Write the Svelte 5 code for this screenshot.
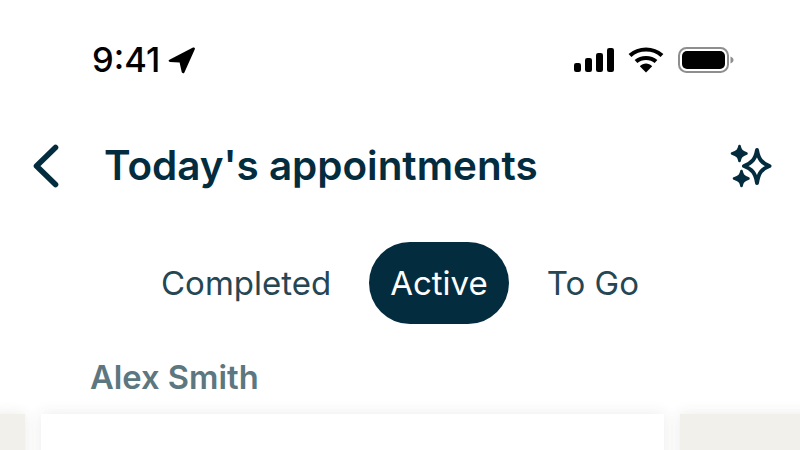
<script>
  const tabs = [
    { label: 'Completed', active: false },
    { label: 'Active', active: true },
    { label: 'To Go', active: false }
  ];
</script>

<div class="screen">
  <header class="status">
    <div class="time-group">
      <span class="time">9:41</span>
      <svg class="loc" width="28" height="28" viewBox="0 0 28 28" aria-hidden="true">
        <path d="M1.4 13.8 L25 1.6 C26.4 0.9 27.4 2 26.8 3.3 L16.4 26.4 C15.8 27.7 14 27.5 13.7 26.1 L11.6 16.4 L2 15.9 C0.5 15.8 0.1 14.5 1.4 13.8 Z" fill="#000"/>
      </svg>
    </div>
    <div class="sys">
      <svg class="signal" width="40" height="26" viewBox="0 0 40 26" aria-hidden="true">
        <rect x="0" y="16" width="7" height="9" rx="2.2"/>
        <rect x="11" y="11" width="7" height="14" rx="2.2"/>
        <rect x="22" y="6" width="7" height="19" rx="2.2"/>
        <rect x="33" y="1" width="7" height="24" rx="2.2"/>
      </svg>
      <svg class="wifi" width="36" height="26" viewBox="0 0 36 26" aria-hidden="true">
        <path d="M2 8.5 C11 0.5 25 0.5 34 8.5" fill="none" stroke="#000" stroke-width="4.2"/>
        <path d="M8 14.5 C13.5 9.8 22.5 9.8 28 14.5" fill="none" stroke="#000" stroke-width="4.2"/>
        <path d="M11.8 19.2 C15.5 15.6 20.5 15.6 24.2 19.2 L18 25.5 Z" fill="#000"/>
      </svg>
      <svg class="battery" width="56" height="26" viewBox="0 0 56 26" aria-hidden="true">
        <rect x="1" y="1" width="49" height="24" rx="7.5" fill="none" stroke="#8e8e8e" stroke-width="2"/>
        <rect x="4" y="4" width="43" height="18" rx="5" fill="#000"/>
        <path d="M52.5 9.5 C54.5 10.2 55.5 11.5 55.5 13 C55.5 14.5 54.5 15.8 52.5 16.5 Z" fill="#8e8e8e"/>
      </svg>
    </div>
  </header>

  <nav class="nav">
    <svg class="back" width="28" height="44" viewBox="0 0 28 44" aria-hidden="true">
      <path d="M24.5 3.5 L5.5 22 L24.5 40.5" fill="none" stroke="#032c3e" stroke-width="5.6" stroke-linecap="round" stroke-linejoin="round"/>
    </svg>
    <h1>Today's appointments</h1>
    <svg class="sparkle" width="42" height="44" viewBox="0 0 42 44" aria-hidden="true">
      <path d="M27 6 C28.5 15 31.5 19 39.5 22 C31.5 25 28.5 29 27 39 C25.5 29 22 25 14 22 C22 19 25.5 15 27 6 Z" fill="none" stroke="#032c3e" stroke-width="4" stroke-linejoin="round"/>
      <path d="M9.5 2 C10.3 6 11.5 7.6 16.5 9.5 C11.5 11.4 10.3 13 9.5 17 C8.7 13 7.5 11.4 2 9.5 C7.5 7.6 8.7 6 9.5 2 Z" fill="#032c3e" stroke="#032c3e" stroke-width="2.6" stroke-linejoin="round"/>
      <path d="M11.5 27 C12.3 31 13.5 32.6 18.5 34.5 C13.5 36.4 12.3 38 11.5 42 C10.7 38 9.5 36.4 4 34.5 C9.5 32.6 10.7 31 11.5 27 Z" fill="#032c3e" stroke="#032c3e" stroke-width="2.6" stroke-linejoin="round"/>
    </svg>
  </nav>

  <div class="tabs">
    {#each tabs as tab}
      <span class="tab" class:active={tab.active}>{tab.label}</span>
    {/each}
  </div>

  <h2>Alex Smith</h2>

  <div class="cards">
    <div class="card side left"></div>
    <div class="card main"></div>
    <div class="card side right"></div>
  </div>
</div>

<style>
  :global(body) {
    margin: 0;
    background: #fff;
  }
  .screen {
    width: 800px;
    height: 450px;
    overflow: hidden;
    background: #fff;
    font-family: Inter, "Liberation Sans", sans-serif;
    color: #032c3e;
    display: flex;
    flex-direction: column;
  }
  .status {
    height: 26px;
    margin-top: 47px;
    padding: 0 66px 0 92px;
    display: flex;
    justify-content: space-between;
    align-items: center;
    color: #000;
  }
  .time-group {
    display: flex;
    align-items: center;
    gap: 8px;
  }
  .time {
    font-size: 34.5px;
    font-weight: 500;
    line-height: 26px;
  }
  .sys {
    display: flex;
    align-items: center;
    gap: 14px;
  }
  .signal {
    fill: #000;
  }
  .nav {
    height: 46px;
    margin-top: 70px;
    padding: 0 28px 0 31px;
    display: flex;
    align-items: center;
  }
  h1 {
    margin: 0 0 0 45px;
    flex: 1;
    font-size: 40.4px;
    line-height: 46px;
    font-weight: 600;
    color: #032c3e;
  }
  .tabs {
    margin-top: 53px;
    margin-left: 131px;
    display: flex;
    align-items: center;
  }
  .tab {
    height: 82px;
    padding: 0 30px;
    display: flex;
    align-items: center;
    font-size: 33px;
    color: #254653;
  }
  .tab + .tab {
    margin-left: 8px;
  }
  .tab.active {
    padding: 0 21px;
    background: #032c3e;
    color: #fff;
    border-radius: 41px;
  }
  h2 {
    margin: 34px 0 0 90px;
    font-size: 32.7px;
    line-height: 38px;
    font-weight: 600;
    color: #5d7780;
  }
  .cards {
    margin-top: 18px;
    flex: 1;
    display: flex;
    gap: 16px;
    margin-left: -10px;
  }
  .card {
    height: 60px;
    flex: none;
    box-shadow: 0 0 14px rgba(60, 60, 50, 0.1);
  }
  .main {
    width: 623px;
    background: #fff;
  }
  .side {
    background: #f1f0ea;
  }
  .left {
    width: 35px;
  }
  .right {
    width: 140px;
  }
</style>
